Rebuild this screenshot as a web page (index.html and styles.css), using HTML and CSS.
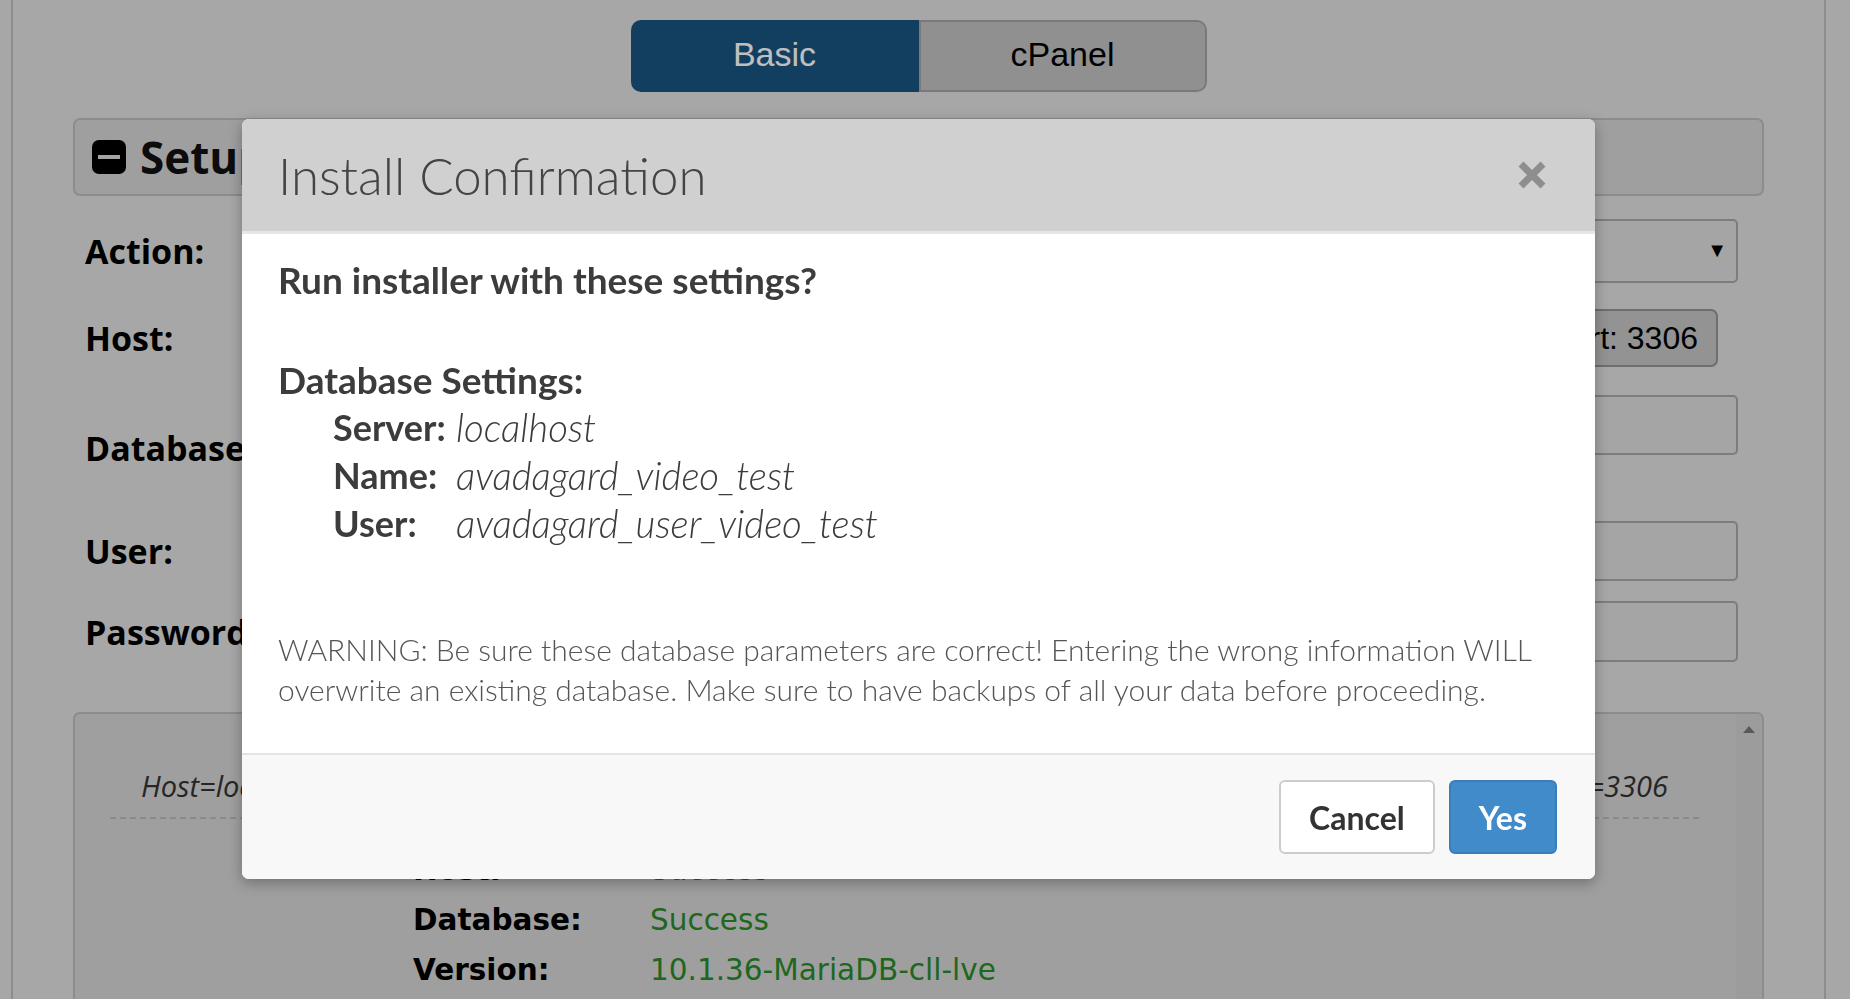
FILE: index.html
```html
<!DOCTYPE html>
<html lang="en">
<head>
    <meta charset="UTF-8">
    <meta name="viewport" content="width=device-width, initial-scale=1.0">
    <title>Installer Setup</title>
    <link rel="stylesheet" href="styles.css">
</head>
<body>
    <div id="page">
        <div class="tabs">
            <button class="tab active">Basic</button>
            <button class="tab">cPanel</button>
        </div>

        <div class="panel setup-head">
            <svg class="toggle" width="34" height="34" viewBox="0 0 34 34">
                <rect x="0" y="0" width="34" height="34" rx="7" fill="#000"/>
                <rect x="6" y="15" width="22" height="4" fill="#ddd"/>
            </svg>
            <h2>Setup</h2>
        </div>

        <div class="setup-form">
            <div class="row row-action">
                <label>Action:</label>
                <div class="field select"><span class="arrow">&#9660;</span></div>
            </div>
            <div class="row row-host">
                <label>Host:</label>
                <div class="field-wrap">
                    <div class="field host-input"></div>
                    <button class="port">Port: 3306</button>
                </div>
            </div>
            <div class="row row-db">
                <label>Database:</label>
                <div class="field"></div>
            </div>
            <div class="row row-user">
                <label>User:</label>
                <div class="field"></div>
            </div>
            <div class="row row-pass">
                <label>Password:</label>
                <div class="field"></div>
            </div>
        </div>

        <div class="panel log">
            <div class="log-body">
                <div class="conn">
                    <span>Host=localhost</span>
                    <span>Database=avadagard_video_test</span>
                    <span>Port=3306</span>
                </div>
                <table class="results">
                    <tr><th>Host:</th><td>Success</td></tr>
                    <tr><th>Database:</th><td>Success</td></tr>
                    <tr><th>Version:</th><td>10.1.36-MariaDB-cll-lve</td></tr>
                </table>
            </div>
            <div class="scrollbar"><span class="up"></span></div>
        </div>
    </div>

    <div class="backdrop"></div>

    <div class="modal">
        <div class="modal-header">
            <h3>Install Confirmation</h3>
            <svg class="close" width="30" height="30" viewBox="0 0 30 30">
                <path d="M4 4 L26 26 M26 4 L4 26" stroke="#8e8e8e" stroke-width="7"/>
            </svg>
        </div>
        <div class="modal-body">
            <h4>Run installer with these settings?</h4>
            <h5>Database Settings:</h5>
            <table class="settings">
                <tr><th>Server:</th><td>localhost</td></tr>
                <tr><th>Name:</th><td>avadagard_video_test</td></tr>
                <tr><th>User:</th><td>avadagard_user_video_test</td></tr>
            </table>
            <p class="warning">WARNING: Be sure these database parameters are correct! Entering the wrong information WILL overwrite an existing database. Make sure to have backups of all your data before proceeding.</p>
        </div>
        <div class="modal-footer">
            <button class="btn">Cancel</button>
            <button class="btn btn-primary">Yes</button>
        </div>
    </div>
</body>
</html>
```

FILE: styles.css
```css
body {
    margin: 0;
    background-color: #dfdfdf;
    font-family: "Liberation Sans", Arial, sans-serif;
    overflow: hidden;
}
#page {
    margin: 0 24px 0 11px;
    height: 999px;
    border-left: 2px solid #bcbcbc;
    border-right: 2px solid #bcbcbc;
    padding: 20px 60px 0 60px;
}
.tabs {
    display: flex;
    justify-content: center;
}
.tab {
    width: 288px;
    height: 72px;
    padding: 0 0 4px 0;
    font-family: "Liberation Sans", Arial, sans-serif;
    font-size: 34px;
    color: #000;
    background-color: #c0c0c0;
    border: 2px solid #a3a3a3;
    border-radius: 0 10px 10px 0;
    margin: 0;
}
.tab.active {
    background-color: #18557f;
    border-color: #18557f;
    color: #fff;
    border-radius: 10px 0 0 10px;
}
.panel {
    background-color: #d5d5d5;
    border: 2px solid #bbbbbb;
    border-radius: 7px;
}
.setup-head {
    margin-top: 26px;
    height: 74px;
    display: flex;
    align-items: center;
    padding-left: 17px;
}
.setup-head h2 {
    margin: 0 0 0 14px;
    font-family: "Open Sans", sans-serif;
    font-size: 44px;
    font-weight: bold;
    color: #111;
}
.setup-form {
    display: flex;
    flex-direction: column;
    padding: 0 26px 0 12px;
}
.row {
    display: flex;
    align-items: center;
}
.row label {
    width: 240px;
    font-family: "Open Sans", sans-serif;
    font-size: 34px;
    font-weight: bold;
    color: #000;
    white-space: nowrap;
}
.field {
    flex: 1;
    height: 60px;
    box-sizing: border-box;
    border: 2px solid #a7a7a7;
    border-radius: 5px;
    background-color: #dcdcdc;
}
.field-wrap {
    flex: 1;
    display: flex;
    align-items: center;
}
.row-action { margin-top: 23px; }
.row-action .field {
    height: 64px;
    position: relative;
}
.arrow {
    position: absolute;
    right: 9px;
    top: 18px;
    font-size: 20px;
    color: #000;
}
.row-host { margin-top: 25px; }
.host-input { margin-right: 16px; }
.port {
    height: 58px;
    padding: 0 18px;
    margin-right: 20px;
    font-family: "Liberation Sans", Arial, sans-serif;
    font-size: 32px;
    color: #000;
    background-color: #c4c4c4;
    border: 2px solid #939393;
    border-radius: 7px;
}
.row-db {
    margin-top: 27px;
    align-items: flex-start;
    height: 100px;
}
.row-db label { margin-top: 30px; }
.row-user { margin-top: 26px; }
.row-pass { margin-top: 20px; }
.row-pass .field { height: 61px; }

.log {
    margin-top: 50px;
    height: 320px;
    display: flex;
}
.log-body {
    flex: 1;
    padding: 52px 37px 0 35px;
}
.conn {
    display: flex;
    justify-content: space-between;
    padding: 0 31px 12px 31px;
    border-bottom: 2px dashed #b8b8b8;
    font-family: "Open Sans", sans-serif;
    font-style: italic;
    font-size: 29px;
    color: #333;
}
.results {
    margin: 26px 0 0 303px;
    border-collapse: collapse;
    font-family: "DejaVu Sans", Verdana, sans-serif;
    font-size: 29.5px;
}
.results th {
    text-align: left;
    width: 237px;
    padding: 8px 0;
    font-weight: bold;
    color: #000;
}
.results td {
    padding: 8px 0;
    color: #2a8a2a;
}
.scrollbar {
    width: 26px;
    background-color: #d0d0d0;
    border-radius: 0 5px 0 0;
}
.up {
    display: block;
    margin: 12px auto 0;
    width: 0;
    height: 0;
    border-left: 6px solid transparent;
    border-right: 6px solid transparent;
    border-bottom: 7px solid #777;
}

.backdrop {
    position: fixed;
    top: 0;
    left: 0;
    right: 0;
    bottom: 0;
    background-color: rgba(0, 0, 0, 0.25);
}
.modal {
    position: fixed;
    left: 242px;
    top: 119px;
    width: 1353px;
    background-color: #fff;
    border-radius: 7px;
    overflow: hidden;
    box-shadow: 0 4px 14px rgba(0, 0, 0, 0.3);
    font-family: Lato, "Open Sans", sans-serif;
    color: #3c3c3c;
}
.modal-header {
    height: 112px;
    padding: 0 48px 0 36px;
    display: flex;
    align-items: center;
    justify-content: space-between;
    background-color: #d0d0d0;
    border-bottom: 3px solid #e6e6e6;
}
.modal-header h3 {
    margin: 0;
    font-size: 51px;
    font-weight: 300;
    color: #444;
}
.modal-body {
    padding: 1px 36px 0 36px;
    height: 518px;
}
.modal-body h4 {
    margin: 22px 0 0 0;
    font-size: 37px;
    font-weight: bold;
    line-height: 46px;
}
.modal-body h5 {
    margin: 54px 0 0 0;
    font-size: 37px;
    font-weight: bold;
    line-height: 46px;
}
.settings {
    margin-left: 55px;
    border-collapse: collapse;
    font-size: 36px;
}
.settings th {
    text-align: left;
    width: 123px;
    padding: 0;
    height: 48px;
    font-weight: bold;
}
.settings td {
    padding: 0;
    font-size: 38.5px;
    font-style: italic;
    font-weight: 300;
}
.warning {
    margin: 82px 0 0 0;
    font-size: 30px;
    font-weight: 300;
    line-height: 40px;
    color: #555;
}
.modal-footer {
    border-top: 2px solid #e3e3e3;
    background-color: #f8f8f8;
    height: 126px;
    box-sizing: border-box;
    padding: 0 38px 0 0;
    display: flex;
    align-items: center;
    justify-content: flex-end;
    gap: 14px;
}
.btn {
    height: 74px;
    padding: 0 28px;
    font-family: Lato, "Open Sans", sans-serif;
    font-size: 32px;
    font-weight: bold;
    color: #333;
    background-color: #fff;
    border: 2px solid #cccccc;
    border-radius: 6px;
}
.btn-primary {
    color: #fff;
    background-color: #428bca;
    border-color: #3b7dba;
}
```
